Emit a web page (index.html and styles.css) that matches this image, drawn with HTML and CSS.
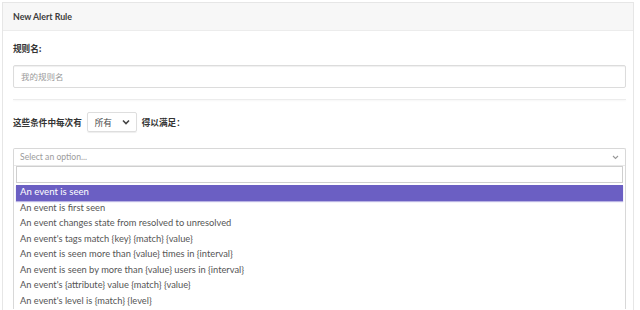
FILE: index.html
```html
<!DOCTYPE html>
<html lang="zh">
<head>
  <meta charset="UTF-8">
  <title>New Alert Rule</title>
  <link rel="stylesheet" href="styles.css">
</head>
<body>
  <div class="panel">
    <div class="panel-header">New Alert Rule</div>
    <div class="panel-body">
      <div class="label">规则名:</div>
      <div class="text-input">我的规则名</div>
      <div class="divider"></div>
      <div class="match-row">
        <span class="label">这些条件中每次有</span>
        <span class="mini-select">所有
          <svg width="8" height="6" viewBox="0 0 8 6"><path d="M1 1.5 L4 4.5 L7 1.5" fill="none" stroke="#444" stroke-width="1.6"/></svg>
        </span>
        <span class="label">得以满足：</span>
      </div>
      <div class="chooser">
        <div class="chooser-head">
          <span>Select an option...</span>
          <svg width="7" height="5" viewBox="0 0 7 5"><path d="M1 1 L3.5 3.5 L6 1" fill="none" stroke="#999" stroke-width="1.1"/></svg>
        </div>
        <div class="chooser-drop">
          <div class="chooser-search"></div>
          <ul class="options">
            <li class="active">An event is seen</li>
            <li>An event is first seen</li>
            <li>An event changes state from resolved to unresolved</li>
            <li>An event's tags match {key} {match} {value}</li>
            <li>An event is seen more than {value} times in {interval}</li>
            <li>An event is seen by more than {value} users in {interval}</li>
            <li>An event's {attribute} value {match} {value}</li>
            <li>An event's level is {match} {level}</li>
          </ul>
        </div>
      </div>
    </div>
  </div>
</body>
</html>
```

FILE: styles.css
```css
body {
  margin: 0;
  background: #fff;
  font-family: Lato, "Noto Sans CJK SC", sans-serif;
  font-size: 10px;
  color: #333;
}
.panel {
  margin: 2px 6px 0 2px;
  border: 1px solid #e6e6e6;
  border-bottom: none;
  height: 320px;
}
.panel-header {
  height: 27px;
  line-height: 27px;
  padding-left: 10px;
  background: #f7f7f7;
  border-bottom: 1px solid #ececec;
  font-size: 8.8px;
  font-weight: 700;
  color: #3b3b3b;
}
.panel-body {
  padding: 0 7px 0 10px;
}
.label {
  font-weight: 700;
  font-size: 8.6px;
  color: #333;
  font-family: "Noto Sans CJK SC", sans-serif;
}
.panel-body > .label {
  margin-top: 10px;
  line-height: 14px;
}
.text-input {
  margin-top: 10px;
  height: 21px;
  line-height: 21px;
  border: 1px solid #dcdcdc;
  border-radius: 2px;
  padding-left: 7px;
  color: #9a9a9a;
  font-size: 8.5px;
  font-family: "Noto Sans CJK SC", sans-serif;
  box-shadow: inset 0 1px 1px #f0f0f0;
}
.divider {
  margin-top: 11px;
  height: 1px;
  background: #ececec;
  box-shadow: 0 1px 2px #f3f3f3;
}
.match-row {
  margin-top: 12px;
  display: flex;
  align-items: center;
  gap: 5px;
  height: 20px;
}
.mini-select {
  display: flex;
  align-items: center;
  justify-content: space-between;
  width: 35px;
  height: 18px;
  padding: 0 6px 0 7px;
  border: 1px solid #dedede;
  border-radius: 2px;
  font-family: "Noto Sans CJK SC", sans-serif;
  font-size: 8.6px;
  color: #444;
  box-shadow: 0 1px 1px #eee;
}
.chooser {
  margin-top: 16px;
  border: 1px solid #d8d8d8;
  border-bottom: none;
  border-radius: 2px 2px 0 0;
}
.chooser-head {
  height: 16px;
  display: flex;
  align-items: center;
  justify-content: space-between;
  padding: 0 6px 0 6px;
  color: #9c9c9c;
  font-size: 8.6px;
  border-bottom: 1px solid #e8e8e8;
}
.chooser-drop {
  padding: 0 2px 0 2px;
}
.chooser-search {
  height: 15px;
  border: 1px solid #cfcfcf;
  margin-bottom: 2px;
}
.options {
  list-style: none;
  margin: 0;
  padding: 0;
}
.options li {
  height: 15.5px;
  line-height: 14.5px;
  padding-left: 4px;
  color: #555;
  font-size: 9.3px;
}
.options li.active {
  background: #6b5fc3;
  color: #fff;
  font-size: 9.6px;
  box-shadow: 0 1px 1px #b9b3e3;
}
```
